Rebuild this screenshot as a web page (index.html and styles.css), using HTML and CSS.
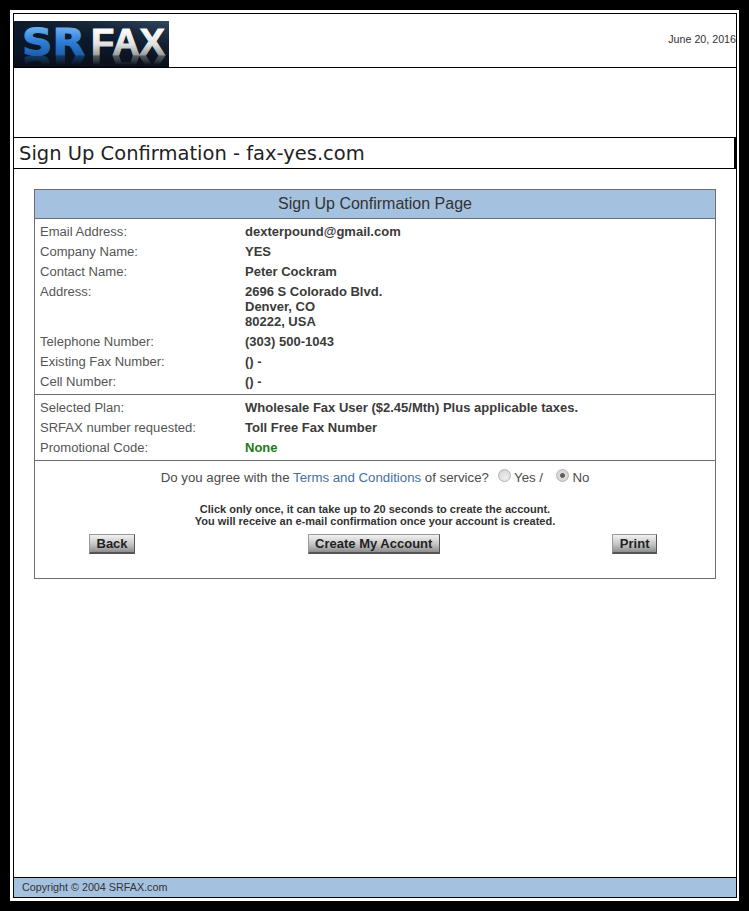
FILE: index.html
```html
<!DOCTYPE html>
<html lang="en">
<head>
<meta charset="utf-8">
<title>Sign Up Confirmation - fax-yes.com</title>
<link rel="stylesheet" href="styles.css">
</head>
<body>
<div class="sheet">
  <div class="frame">
    <header class="masthead">
      <svg class="logo" width="155" height="46" viewBox="0 0 155 46" role="img" aria-label="SRFAX">
        <defs>
          <linearGradient id="logoBg" x1="0" y1="0" x2="0" y2="1">
            <stop offset="0" stop-color="#0d1b2e"/>
            <stop offset="0.7" stop-color="#0a1626"/>
            <stop offset="1" stop-color="#0a0f16"/>
          </linearGradient>
          <linearGradient id="logoStreak" x1="1" y1="0" x2="0.55" y2="0.6">
            <stop offset="0" stop-color="#4a6a85" stop-opacity="0.6"/>
            <stop offset="1" stop-color="#0d1b2e" stop-opacity="0"/>
          </linearGradient>
          <linearGradient id="srFill" gradientUnits="userSpaceOnUse" x1="0" y1="7" x2="0" y2="34">
            <stop offset="0" stop-color="#6aaeef"/>
            <stop offset="0.5" stop-color="#2f7fd6"/>
            <stop offset="1" stop-color="#1d5fae"/>
          </linearGradient>
          <linearGradient id="faxFill" gradientUnits="userSpaceOnUse" x1="0" y1="7" x2="0" y2="34">
            <stop offset="0" stop-color="#ffffff"/>
            <stop offset="0.6" stop-color="#e2e2e2"/>
            <stop offset="1" stop-color="#9c9c9c"/>
          </linearGradient>
          <linearGradient id="fade" gradientUnits="userSpaceOnUse" x1="0" y1="34" x2="0" y2="44">
            <stop offset="0" stop-color="#fff" stop-opacity="0.55"/>
            <stop offset="1" stop-color="#fff" stop-opacity="0"/>
          </linearGradient>
          <mask id="fadeMask" maskUnits="userSpaceOnUse" x="0" y="0" width="155" height="46">
            <rect x="0" y="34" width="155" height="12" fill="url(#fade)"/>
          </mask>
          <g id="logoWord">
            <text class="logo-sr" x="8" y="34" textLength="63" lengthAdjust="spacingAndGlyphs" fill="url(#srFill)" stroke="url(#srFill)">SR</text>
            <text class="logo-fax" x="77" y="34" textLength="74" lengthAdjust="spacingAndGlyphs" fill="url(#faxFill)" stroke="url(#faxFill)">FAX</text>
          </g>
        </defs>
        <rect width="155" height="46" fill="url(#logoBg)"/>
        <rect width="155" height="46" fill="url(#logoStreak)"/>
        <use href="#logoWord"/>
        <g mask="url(#fadeMask)">
          <use href="#logoWord" transform="translate(0 69) scale(1 -1)"/>
        </g>
      </svg>
      <div class="date">June 20, 2016</div>
    </header>
    <div class="spacer"></div>
    <h1 class="page-title">Sign Up Confirmation - fax-yes.com</h1>
    <main class="content">
      <section class="panel">
        <h2 class="panel-title">Sign Up Confirmation Page</h2>
        <div class="group">
          <div class="row"><span class="label">Email Address:</span><span class="value">dexterpound@gmail.com</span></div>
          <div class="row"><span class="label">Company Name:</span><span class="value">YES</span></div>
          <div class="row"><span class="label">Contact Name:</span><span class="value">Peter Cockram</span></div>
          <div class="row"><span class="label">Address:</span><span class="value">2696 S Colorado Blvd.<br>Denver, CO<br>80222, USA</span></div>
          <div class="row"><span class="label">Telephone Number:</span><span class="value">(303) 500-1043</span></div>
          <div class="row"><span class="label">Existing Fax Number:</span><span class="value">() -</span></div>
          <div class="row"><span class="label">Cell Number:</span><span class="value">() -</span></div>
        </div>
        <div class="group">
          <div class="row"><span class="label">Selected Plan:</span><span class="value">Wholesale Fax User ($2.45/Mth) Plus applicable taxes.</span></div>
          <div class="row"><span class="label">SRFAX number requested:</span><span class="value">Toll Free Fax Number</span></div>
          <div class="row"><span class="label">Promotional Code:</span><span class="value value-ok">None</span></div>
        </div>
        <form class="agree">
          <p class="agree-line">Do you agree with the <a class="terms" href="#">Terms and Conditions</a> of service?
            <label class="choice"><input class="radio" type="radio" name="agree"> Yes /</label>
            <label class="choice choice-no"><input class="radio" type="radio" name="agree" checked> No</label>
          </p>
          <p class="notice">Click only once, it can take up to 20 seconds to create the account.<br>You will receive an e-mail confirmation once your account is created.</p>
          <div class="actions">
            <button class="btn" type="button">Back</button>
            <button class="btn" type="button">Create My Account</button>
            <button class="btn" type="button">Print</button>
          </div>
        </form>
      </section>
    </main>
    <footer class="footer">Copyright © 2004 SRFAX.com</footer>
  </div>
</div>
</body>
</html>
```
FILE: styles.css
```css
* { box-sizing: border-box; }
html, body { margin: 0; padding: 0; }
body {
  background: #000;
  font-family: "Liberation Sans", Arial, sans-serif;
  color: #444;
  padding: 10px 10px 0;
  height: 911px;
  overflow: hidden;
}
.sheet {
  width: 729px;
  height: 891px;
  background: #fff;
  padding: 3px 2px 3px 3px;
}
.frame {
  height: 100%;
  border: 1px solid #000;
  display: flex;
  flex-direction: column;
}
.masthead {
  height: 54px;
  flex: none;
  border-bottom: 1px solid #000;
  display: flex;
  align-items: flex-end;
  justify-content: space-between;
}
.logo { display: block; }
.logo-sr { font: 700 37px "DejaVu Sans", sans-serif; stroke-width: 1; }
.logo-fax { font: 700 37px "Liberation Sans", sans-serif; stroke-width: 1; }
.date {
  font-size: 10.7px;
  line-height: 13px;
  color: #333;
  align-self: flex-start;
  margin-top: 19px;
}
.spacer { height: 69px; flex: none; }
.page-title {
  margin: 0;
  height: 32px;
  flex: none;
  border: 1px solid #000;
  border-left: 0;
  border-right: 2px solid #000;
  font: 400 19.5px/31px "DejaVu Sans", Verdana, sans-serif;
  color: #222;
  padding-left: 5px;
}
.content { flex: 1; padding: 20px 20px 0; }
.panel {
  width: 682px;
  height: 390px;
  border: 1px solid #6b6f73;
}
.panel-title {
  margin: 0;
  height: 29px;
  background: #a5c1e0;
  border-bottom: 1px solid #6b6f73;
  font: 400 16px/28px "Liberation Sans", Arial, sans-serif;
  color: #333;
  text-align: center;
}
.group {
  padding: 2px 0 3px;
  border-bottom: 1px solid #6b6f73;
}
.row {
  display: grid;
  grid-template-columns: 205px 1fr;
  padding: 3px 5px 2px;
  font-size: 13px;
  line-height: 15px;
}
.label { color: #555; font-size: 13.05px; }
.value { font-weight: 700; color: #3a3a3a; }
.value-ok { color: #1b7a1b; }
.agree { display: block; }
.agree-line {
  margin: 0;
  padding-top: 8px;
  height: 40px;
  text-align: center;
  font-size: 13.25px;
  line-height: 16px;
  color: #4a4a4a;
}
.terms { color: #44709f; text-decoration: none; }
.choice { margin-left: 5px; }
.choice-no { margin-left: 9px; }
.radio {
  appearance: none;
  -webkit-appearance: none;
  display: inline-block;
  width: 13px;
  height: 13px;
  margin: 0 0 5px;
  vertical-align: middle;
  border-radius: 50%;
  border: 1px solid #b4b4b4;
  background: radial-gradient(circle at 60% 65%, #f0f0f0 0, #dcdcdc 60%, #c8c8c8 100%);
}
.radio:checked {
  background: radial-gradient(circle, #555 0, #666 27%, #dcdcdc 36%, #cfcfcf 100%);
}
.notice {
  margin: 0;
  padding-top: 2px;
  height: 33px;
  text-align: center;
  font-size: 11px;
  font-weight: 700;
  line-height: 12px;
  color: #333;
}
.actions {
  display: flex;
  justify-content: space-between;
  padding: 0 58px 0 54px;
}
.btn {
  height: 20px;
  padding: 0 6.5px 1px;
  font: 700 13px/15px "Liberation Sans", Arial, sans-serif;
  color: #222;
  background: linear-gradient(#f2f2f2, #c4c4c4 55%, #8e8e8e);
  border: 1px solid #666;
  border-right-color: #555;
  border-bottom: 2px solid #555;
  border-left-color: #999;
  border-top-color: #999;
  border-radius: 0;
}
.footer {
  height: 20px;
  flex: none;
  border-top: 1px solid #000;
  background: #a5c1e0;
  font-size: 10.75px;
  line-height: 19px;
  color: #333;
  padding-left: 8px;
}
```
